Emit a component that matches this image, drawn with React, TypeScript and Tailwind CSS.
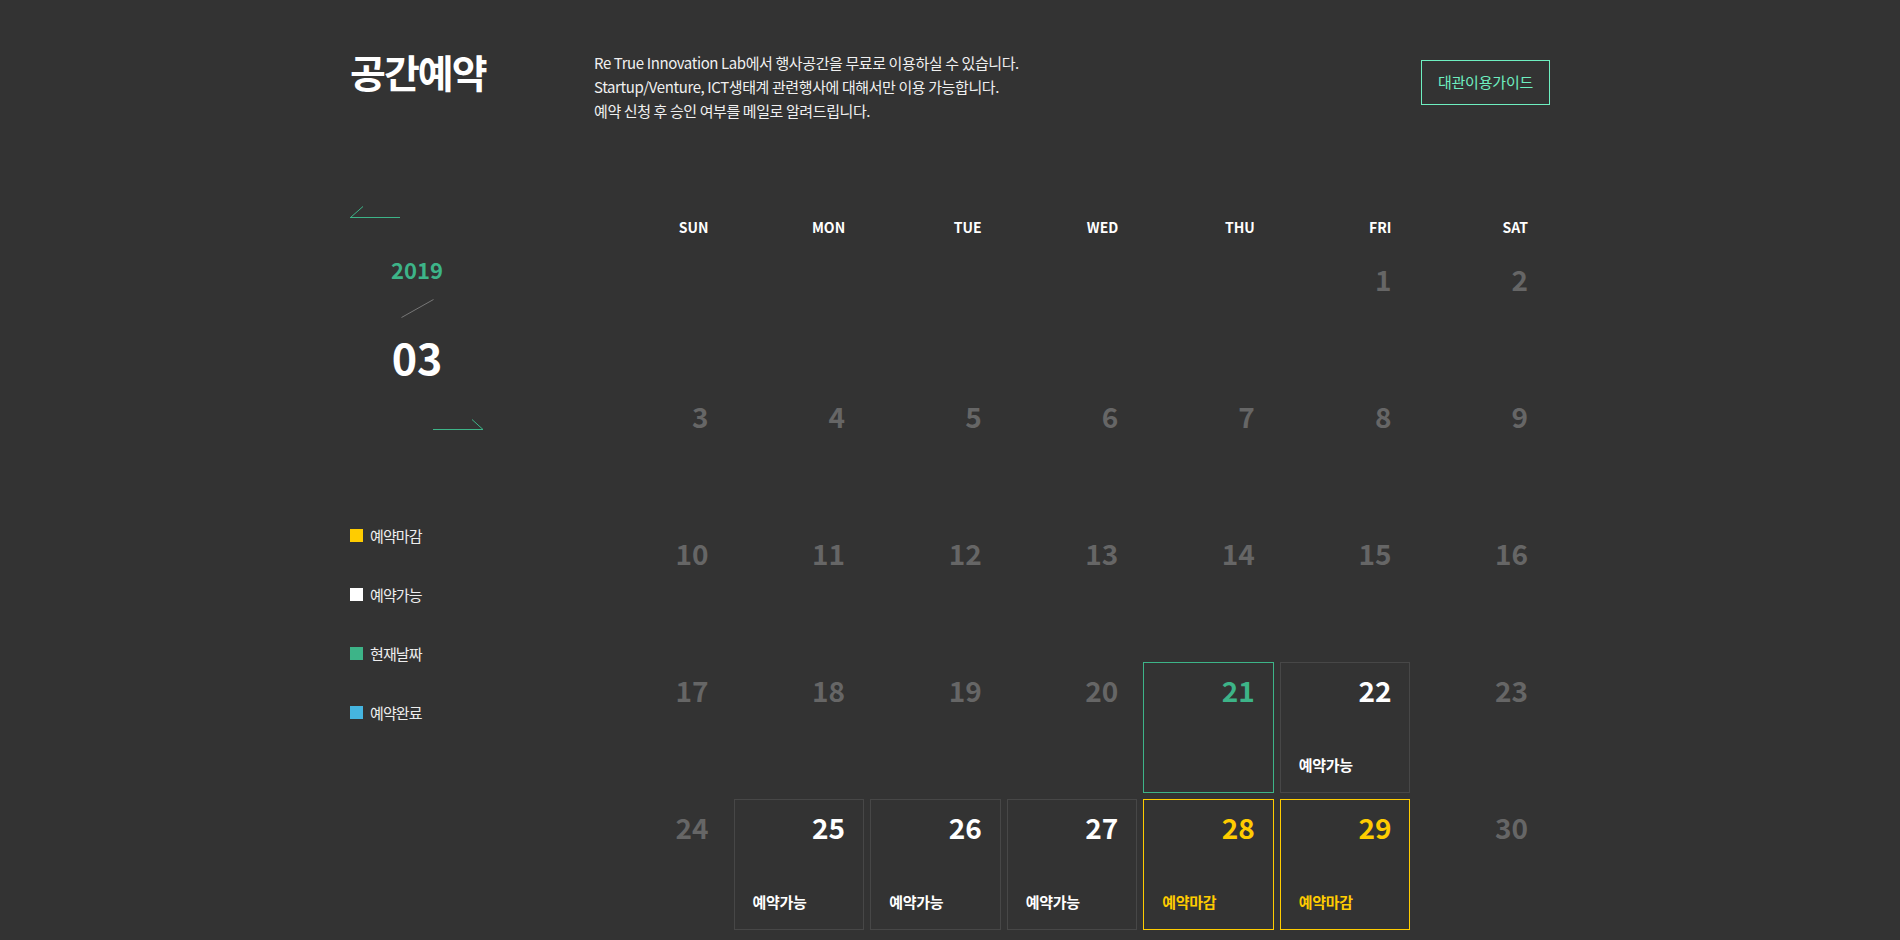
import clsx from "clsx";

type DayState = "past" | "today" | "open" | "closed";

interface Day {
  d: number;
  s: DayState;
}

const weekdays = ["SUN", "MON", "TUE", "WED", "THU", "FRI", "SAT"];

const openDays = [22, 25, 26, 27];
const closedDays = [28, 29];

function stateOf(d: number): DayState {
  if (d === 21) return "today";
  if (openDays.includes(d)) return "open";
  if (closedDays.includes(d)) return "closed";
  return "past";
}

// march 2019 starts on a friday
const days: (Day | null)[] = [
  ...Array.from({ length: 5 }, () => null),
  ...Array.from({ length: 30 }, (_, i) => ({ d: i + 1, s: stateOf(i + 1) })),
];

const legend = [
  { label: "예약마감", color: "bg-[#ffcc00]" },
  { label: "예약가능", color: "bg-white" },
  { label: "현재날짜", color: "bg-[#3db488]" },
  { label: "예약완료", color: "bg-[#45b5e0]" },
];

function DayCell({ day }: { day: Day | null }) {
  if (!day) {
    return <div className="h-[131px]" />;
  }

  const { d, s } = day;
  const label = s === "open" ? "예약가능" : s === "closed" ? "예약마감" : null;

  return (
    <div
      className={clsx(
        "flex h-[131px] flex-col justify-between border pt-[13px] pr-[18px] pb-[20px] pl-[18px]",
        s === "past" && "border-transparent",
        s === "today" && "border-[#3db488]",
        s === "open" && "border-[#474747]",
        s === "closed" && "border-[#ffcc00]",
      )}
    >
      <span
        className={clsx(
          "self-end text-[28px] font-bold leading-none",
          s === "past" && "text-[#666666]",
          s === "today" && "text-[#3db488]",
          s === "open" && "text-white",
          s === "closed" && "text-[#ffcc00]",
        )}
      >
        {d}
      </span>
      {label ? (
        <span
          className={clsx(
            "text-[15px] font-bold leading-none tracking-[-0.3px]",
            s === "closed" ? "text-[#ffcc00]" : "text-white",
          )}
        >
          {label}
        </span>
      ) : null}
    </div>
  );
}

export default function App() {
  return (
    <div className="min-h-screen bg-[#333333] font-['Noto_Sans_CJK_KR','Noto_Sans',sans-serif] text-white">
      <div className="mx-auto w-[1200px] pt-[51px]">
        <header className="flex items-start">
          <h1 className="mt-[1px] w-[244px] shrink-0 text-[39px] font-bold leading-none tracking-[-2px]">공간예약</h1>
          <div className="flex-1 text-[15px] leading-[24px] tracking-[-0.4px] text-[#f0f0f0]">
            <p>Re True Innovation Lab에서 행사공간을 무료로 이용하실 수 있습니다.</p>
            <p>Startup/Venture, ICT생태계 관련행사에 대해서만 이용 가능합니다.</p>
            <p>예약 신청 후 승인 여부를 메일로 알려드립니다.</p>
          </div>
          <button
            className="mt-[9px] flex h-[45px] w-[129px] items-center justify-center border border-[#6eefc0] text-[15px] tracking-[-0.2px] text-[#6eefc0]"
            type="button"
          >
            대관이용가이드
          </button>
        </header>

        <div className="mt-[77px] flex">
          <aside className="w-[244px] shrink-0">
            <div className="flex w-[134px] flex-col items-center">
              <svg className="mt-[6px] self-start" width="51" height="12" viewBox="0 0 51 12" fill="none">
                <path d="M0 11.5H50M0.5 11.5L13 0.5" stroke="#3db488" strokeWidth="1" />
              </svg>
              <span className="mt-[40px] text-[22px] font-bold leading-none text-[#3db488]">2019</span>
              <svg className="mt-[19px]" width="33" height="19" viewBox="0 0 33 19" fill="none">
                <path d="M0.5 18.5L32.5 0.5" stroke="#777777" strokeWidth="1" />
              </svg>
              <span className="mt-[17px] text-[43px] font-bold leading-none">03</span>
              <svg className="mt-[41px] self-end" width="51" height="12" viewBox="0 0 51 12" fill="none">
                <path d="M0 10.5H50M50 10.5L39 0.5" stroke="#3db488" strokeWidth="1" />
              </svg>
            </div>

            <ul className="mt-[97px] flex flex-col gap-[44px]">
              {legend.map((item) => (
                <li key={item.label} className="flex items-center gap-[7px]">
                  <span className={clsx("h-[13px] w-[13px]", item.color)} />
                  <span className="text-[15px] leading-none tracking-[-0.9px] text-[#eeeeee]">{item.label}</span>
                </li>
              ))}
            </ul>
          </aside>

          <section className="w-[956px] pt-[20px]">
            <div className="grid grid-cols-7 gap-x-[6px] px-[3px]">
              {weekdays.map((w) => (
                <span key={w} className="pr-[19px] text-right text-[14px] font-bold leading-none">
                  {w}
                </span>
              ))}
            </div>
            <div className="mt-[17px] grid grid-cols-7 gap-x-[6px] gap-y-[6px] px-[3px]">
              {days.map((day, i) => (
                <DayCell key={i} day={day} />
              ))}
            </div>
          </section>
        </div>
      </div>
    </div>
  );
}
